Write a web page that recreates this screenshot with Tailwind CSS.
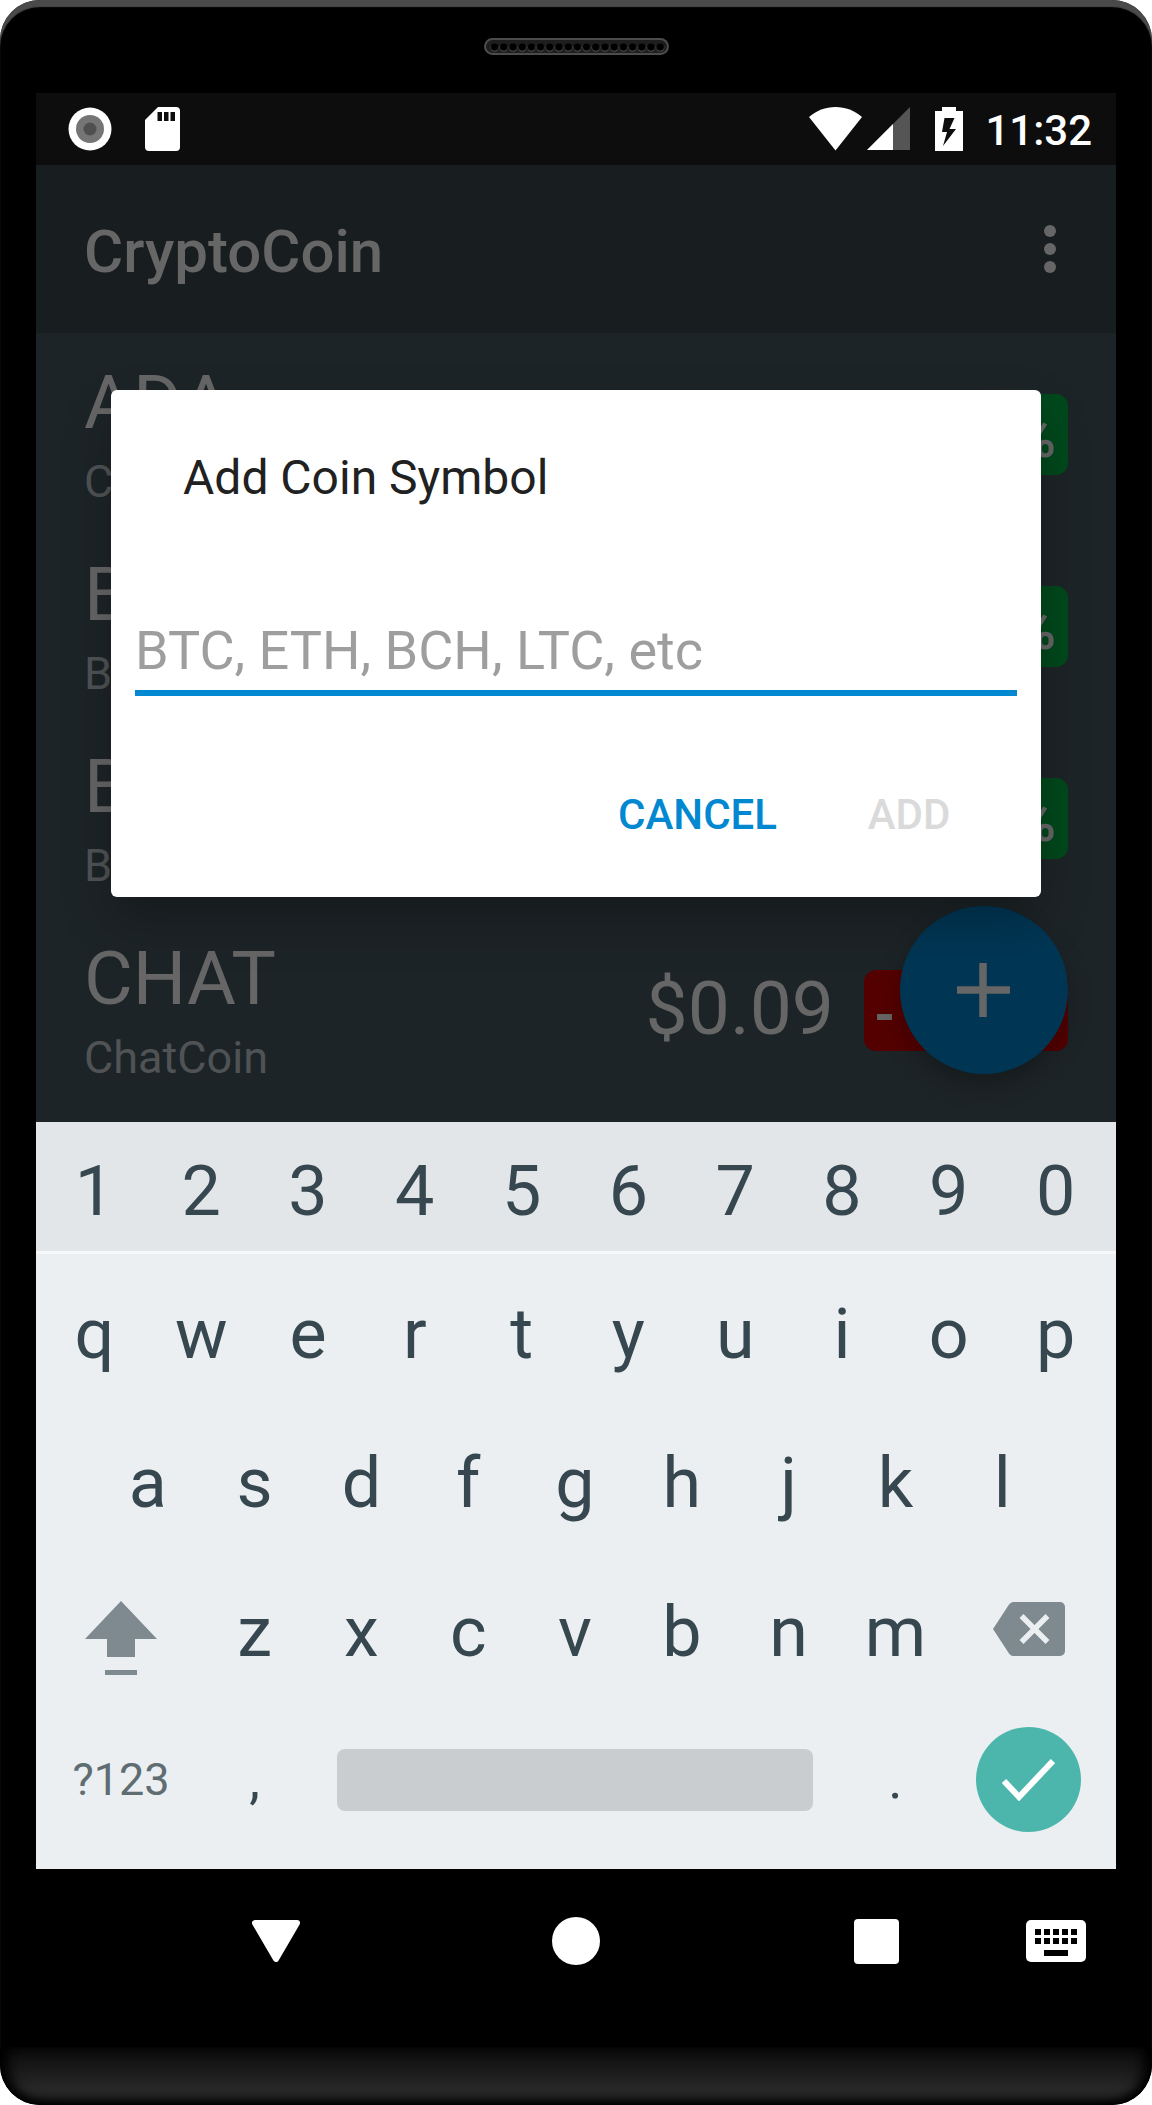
<!DOCTYPE html>
<html lang="en">
<head>
<meta charset="utf-8">
<meta name="viewport" content="width=device-width, initial-scale=1">
<title>CryptoCoin</title>
<script src="https://cdn.jsdelivr.net/npm/@tailwindcss/browser@4"></script>
</head>
<body class="bg-white font-['Roboto',sans-serif]">
<div class="flex min-h-screen flex-col overflow-hidden rounded-[40px] bg-black shadow-[inset_0_7px_1px_#4a4a4a]">

  <!-- Earpiece -->
  <div class="flex h-[93px] justify-center pt-[38px]">
    <svg class="h-[17px] w-[185px]" viewBox="0 0 185 17" aria-hidden="true">
      <defs>
        <pattern id="holes" x="6" y="4" width="9.2" height="10" patternUnits="userSpaceOnUse">
          <circle cx="4.6" cy="5.6" r="4" fill="#5a5a5a"/>
          <circle cx="4.6" cy="5" r="3.7" fill="#000"/>
        </pattern>
      </defs>
      <rect x="1" y="1" width="183" height="15" rx="7.5" fill="#1e1e1e" stroke="#4c4c4c" stroke-width="2"/>
      <rect x="6" y="4" width="174.8" height="10" fill="url(#holes)"/>
    </svg>
  </div>

  <div class="mx-[36px] flex flex-col">
    <!-- Status bar -->
    <div class="flex h-[72px] items-center justify-between bg-[#0d0d0d] pr-6 pl-8">
      <div class="flex items-center gap-[33px]">
        <svg class="size-[44px]" viewBox="0 0 44 44" aria-hidden="true"><circle cx="22" cy="22" r="21.5" fill="#fff"/><circle cx="22" cy="22" r="14" fill="#757575"/><circle cx="22" cy="22" r="6.5" fill="#4f4f4f"/></svg>
        <svg class="h-[44px] w-[35px]" viewBox="0 0 35 44" aria-hidden="true"><path fill="#fff" d="M13 0h18a4 4 0 0 1 4 4v36a4 4 0 0 1-4 4H4a4 4 0 0 1-4-4V13z"/><path fill="#0d0d0d" d="M12.500 5h4.500v9h-4.500zM19 5h4.500v9H19zM25.500 5H30v9h-4.500z"/></svg>
      </div>
      <div class="flex items-center text-white">
        <svg class="mr-[5px] h-[44px] w-[53px]" viewBox="0 0 53 44" aria-hidden="true"><path fill="#fff" d="M0 10C7.500 3.500 16.500 0 26.500 0S45.500 3.500 53 10L26.500 43.500z"/></svg>
        <svg class="mr-[25px] h-[44px] w-[43px]" viewBox="0 0 43 44" aria-hidden="true"><path fill="#555" d="M43 0v43H0z"/><path fill="#fff" d="M26 17v26H0z"/></svg>
        <svg class="mr-[22px] h-[44px] w-[28px]" viewBox="0 0 28 44" aria-hidden="true"><path fill="#fff" d="M7 0h14v4h7v40H0V4h7z"/><path fill="#0d0d0d" d="M9.500 11h10L14.500 22H21L8 39l4-14H7z"/></svg>
        <span class="pt-1 text-[42px] leading-[50px] font-medium">11:32</span>
      </div>
    </div>

    <!-- App window -->
    <div class="relative bg-[#1d2427] pb-[16px]">
      <header class="flex h-[168px] items-center justify-between bg-[#181d20] px-12">
        <h1 class="pt-[6px] text-[60px] leading-[70px] font-medium text-[#666]">CryptoCoin</h1>
        <button type="button" aria-label="More options" class="-mr-9 flex h-24 w-[108px] items-center justify-center">
          <svg class="h-12 w-3" viewBox="0 0 12 48" fill="#666" aria-hidden="true"><circle cx="6" cy="6" r="6"/><circle cx="6" cy="24" r="6"/><circle cx="6" cy="42" r="6"/></svg>
        </button>
      </header>

      <ul class="px-12 pt-[5px]">
        <li class="flex h-48 items-center text-[#666]">
          <div class="flex-1 pb-[2px]"><div class="text-[75px] leading-[88px]">ADA</div><div class="mt-[9px] text-[45px] leading-[53px] text-[#505355]">Cardano</div></div>
          <div class="w-[204px] rounded-xl bg-[#00481c] px-3 pt-[13px] pb-[5px] text-right text-[54px] leading-[63px] font-bold">%</div>
        </li>
        <li class="flex h-48 items-center text-[#666]">
          <div class="flex-1 pb-[2px]"><div class="text-[75px] leading-[88px]">BCH</div><div class="mt-[9px] text-[45px] leading-[53px] text-[#505355]">Bitcoin</div></div>
          <div class="w-[204px] rounded-xl bg-[#00481c] px-3 pt-[13px] pb-[5px] text-right text-[54px] leading-[63px] font-bold">%</div>
        </li>
        <li class="flex h-48 items-center text-[#666]">
          <div class="flex-1 pb-[2px]"><div class="text-[75px] leading-[88px]">BTC</div><div class="mt-[9px] text-[45px] leading-[53px] text-[#505355]">Bitcoin</div></div>
          <div class="w-[204px] rounded-xl bg-[#00481c] px-3 pt-[13px] pb-[5px] text-right text-[54px] leading-[63px] font-bold">%</div>
        </li>
        <li class="flex h-48 items-center text-[#666]">
          <div class="flex-1 pb-[2px]"><div class="text-[75px] leading-[88px]">CHAT</div><div class="mt-[9px] text-[45px] leading-[53px] text-[#505355]">ChatCoin</div></div>
          <div class="mr-[30px] pb-1 text-[75px] leading-[88px]">$0.09</div>
          <div class="w-[204px] rounded-xl bg-[#540000] px-[10px] pt-[13px] pb-[5px] text-[54px] leading-[63px] font-bold">- 1.9%</div>
        </li>
      </ul>

      <button type="button" aria-label="Add coin" class="absolute right-12 bottom-12 flex size-[168px] items-center justify-center rounded-full bg-[#003654] shadow-[0_12px_24px_rgba(0,0,0,0.25)]">
        <svg class="size-[54px]" viewBox="0 0 54 54" aria-hidden="true"><path d="M26 0v54M0 27h53" stroke="#666" stroke-width="7.5"/></svg>
      </button>

      <!-- Add coin dialog -->
      <div class="absolute inset-0 flex items-center justify-center px-[75px]">
        <form role="dialog" aria-labelledby="dialog-title" class="flex w-full flex-col rounded-md bg-white px-6 pt-[60px] pb-7 shadow-[0_24px_48px_rgba(0,0,0,0.25)]">
          <label id="dialog-title" for="symbol" class="px-12 text-[48px] leading-[56px] text-[#212121]">Add Coin Symbol</label>
          <input id="symbol" type="text" placeholder="BTC, ETH, BCH, LTC, etc" class="mt-[113px] h-[77px] w-full border-b-6 border-[#0288d1] pb-2 text-[54px] leading-[63px] text-[#212121] outline-none placeholder:text-[#9e9e9e]">
          <div class="mt-[65px] mr-3 flex justify-end gap-3 text-[42px] leading-[50px] font-medium">
            <button type="button" class="h-[108px] px-6 text-[#0288d1]">CANCEL</button>
            <button type="submit" disabled class="h-[108px] w-48 text-[#dadada]">ADD</button>
          </div>
        </form>
      </div>
    </div>

    <!-- Keyboard -->
    <div class="bg-[#ebeff2] text-[70px] leading-[82px] text-[#37474f]">
      <div class="grid h-[132px] grid-cols-10 border-b-3 border-[#f5f7f8] bg-[#e3e6e9] pt-2 pr-[7px] pl-[5px]">
        <button type="button">1</button><button type="button">2</button><button type="button">3</button><button type="button">4</button><button type="button">5</button><button type="button">6</button><button type="button">7</button><button type="button">8</button><button type="button">9</button><button type="button">0</button>
      </div>
      <div class="pt-[5px] pr-[7px] pb-[14px] pl-[5px]">
        <div class="grid h-[149px] grid-cols-10">
          <button type="button">q</button><button type="button">w</button><button type="button">e</button><button type="button">r</button><button type="button">t</button><button type="button">y</button><button type="button">u</button><button type="button">i</button><button type="button">o</button><button type="button">p</button>
        </div>
        <div class="grid h-[149px] grid-cols-[1fr_repeat(9,2fr)_1fr]">
          <button type="button" class="col-start-2">a</button><button type="button">s</button><button type="button">d</button><button type="button">f</button><button type="button">g</button><button type="button">h</button><button type="button">j</button><button type="button">k</button><button type="button">l</button>
        </div>
        <div class="grid h-[149px] grid-cols-[3fr_repeat(7,2fr)_3fr]">
          <button type="button" aria-label="Shift" class="flex items-center justify-center pt-3">
            <svg class="h-[74px] w-[72px]" viewBox="0 0 72 74" fill="#7f8a90" aria-hidden="true"><path d="M36 0l36 38H50v18H22V38H0zM20 69h32v5H20z"/></svg>
          </button>
          <button type="button">z</button><button type="button">x</button><button type="button">c</button><button type="button">v</button><button type="button">b</button><button type="button">n</button><button type="button">m</button>
          <button type="button" aria-label="Backspace" class="flex items-center justify-center pb-[6px]">
            <svg class="h-[54px] w-[72px]" viewBox="0 0 72 54" aria-hidden="true"><path fill="#7f8a90" d="M20 0h47a5 5 0 0 1 5 5v44a5 5 0 0 1-5 5H20q-2 0-4-2.500L0 27 16 2.500Q18 0 20 0z"/><path d="M28.500 14l26 26M54.500 14l-26 26" stroke="#ebeff2" stroke-width="5.500"/></svg>
          </button>
        </div>
        <div class="grid h-[149px] grid-cols-[3fr_2fr_10fr_2fr_3fr] items-center pb-[2px] text-[54px]">
          <button type="button" class="text-[45px] text-[#5f6d73]">?123</button>
          <button type="button">,</button>
          <button type="button" aria-label="Space" class="mx-[29px] h-[62px] rounded-lg bg-[#c9cdd0]"></button>
          <button type="button">.</button>
          <button type="button" aria-label="Done" class="flex size-[105px] items-center justify-center justify-self-center rounded-full bg-[#4db6ac]">
            <svg class="h-[42px] w-[53px]" viewBox="0 0 53 42" aria-hidden="true"><path d="M2 22l15 16L51 2" fill="none" stroke="#fff" stroke-width="6"/></svg>
          </button>
        </div>
      </div>
    </div>

    <!-- Navigation bar -->
    <nav class="grid h-36 grid-cols-[90px_1fr_1fr_1fr_90px] items-center">
      <button type="button" aria-label="Back" class="col-start-2 justify-self-center"><svg class="h-[42px] w-[48px]" viewBox="0 0 48 42" aria-hidden="true"><path d="M3 3h42L24 39z" fill="#fff" stroke="#fff" stroke-width="6" stroke-linejoin="round"/></svg></button>
      <button type="button" aria-label="Home" class="size-12 justify-self-center rounded-full bg-white"></button>
      <button type="button" aria-label="Recent apps" class="size-[45px] justify-self-center rounded-sm bg-white"></button>
      <button type="button" aria-label="Switch keyboard"><svg class="h-[42px] w-[60px]" viewBox="0 0 60 42" aria-hidden="true"><rect width="60" height="42" rx="5" fill="#fff"/><path d="M9 9h6v6H9zM18 9h6v6h-6zM27 9h6v6h-6zM36 9h6v6h-6zM45 9h6v6h-6zM9 18h6v6H9zM18 18h6v6h-6zM27 18h6v6h-6zM36 18h6v6h-6zM45 18h6v6h-6zM18 30h24v6H18z"/></svg></button>
    </nav>
  </div>

  <!-- Chin of the handset -->
  <div class="mt-[34px] h-[58px] rounded-b-[40px] bg-linear-to-b from-[#0b0b0b] via-[#272727] via-70% to-[#242424] shadow-[inset_0_-6px_8px_-2px_#000,inset_12px_0_14px_-4px_#000,inset_-12px_0_14px_-4px_#000]"></div>
</div>
</body>
</html>
